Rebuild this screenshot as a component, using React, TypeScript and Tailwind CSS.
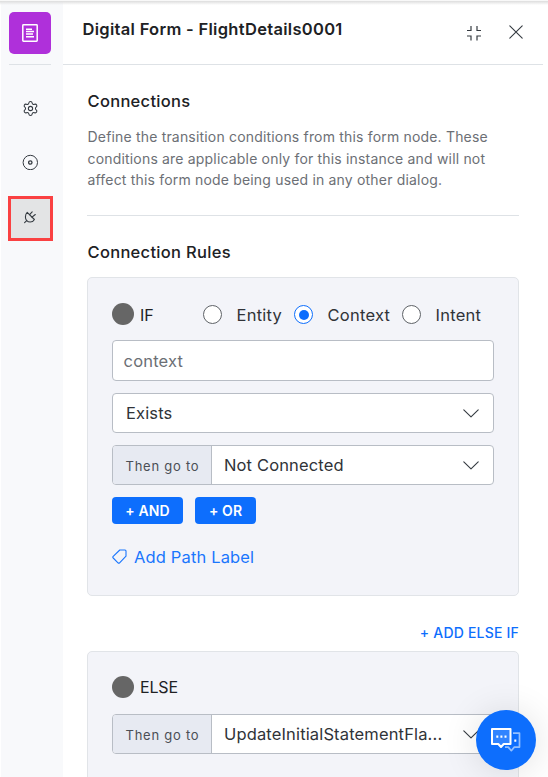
import React from "react";
import { Settings } from "lucide-react";

function Chevron() {
  return (
    <svg className="relative top-px" width="16" height="9" viewBox="0 0 16 9" fill="none" stroke="#343a40" strokeWidth="1.1" strokeLinecap="round" strokeLinejoin="round">
      <path d="M0.8 0.8 8 7.8 15.2 0.8" />
    </svg>
  );
}

function Radio({ checked = false }: { checked?: boolean }) {
  return (
    <span
      className={`mb-px flex h-[19px] w-[19px] shrink-0 items-center justify-center rounded-full border bg-white ${
        checked ? "border-[#0d6efd]" : "border-[#5f6368]"
      }`}
    >
      {checked && <span className="h-[10px] w-[10px] rounded-full bg-[#0d6efd]" />}
    </span>
  );
}

function GoTo({ value }: { value: string }) {
  return (
    <div className="flex h-10 overflow-hidden rounded-[4px] border border-[#b8bdc5] bg-white">
      <div className="flex w-[99px] shrink-0 items-center border-r border-[#b8bdc5] bg-[#e7eaf2] pt-1 pl-[12.5px] text-[13px] tracking-[0.75px] text-[#4b4f55]">
        Then go to
      </div>
      <div className="flex flex-1 items-center justify-between pr-[14px] pl-3">
        <span className="pt-px text-[16.5px] tracking-[0.15px] text-[#303338]">{value}</span>
        <Chevron />
      </div>
    </div>
  );
}

function Sidebar() {
  return (
    <aside className="ml-px flex w-[62px] shrink-0 flex-col items-center bg-[#f8f9fb] pr-1 pt-3">
      <div className="flex h-[42px] w-[42px] items-center justify-center rounded-[5px] bg-[#af30da]">
        <svg width="16" height="18" viewBox="0 0 16 18" fill="none" stroke="white" strokeWidth="1.5">
          <rect x="0.8" y="0.8" width="14.4" height="16.4" rx="0.7" />
          <path d="M4 5.2h6M4 7.5h8M4 10h7M4 12.8h8" strokeWidth="1.4" />
        </svg>
      </div>
      <div className="mt-[10px] h-px w-[42px] bg-[#dee2e6]" />
      <Settings className="mt-[35px] text-[#343a40]" size={17} strokeWidth={1.5} />
      <svg className="mt-[37px]" width="16" height="16" viewBox="0 0 16 16" fill="none" stroke="#343a40">
        <circle cx="8.3" cy="8.5" r="7.2" />
        <circle cx="8.3" cy="8.5" r="1.7" strokeWidth="1.3" />
      </svg>
      <div className="mt-[26px] flex h-[45px] w-[45px] items-center justify-center border-[3px] border-[#fa4142] bg-[#e3e4e5] pb-[4px]">
        <svg width="14" height="14" viewBox="0 0 14 14" fill="none" stroke="#343a40" strokeWidth="1.1" strokeLinecap="round" strokeLinejoin="round">
          <path d="m4.2 2.3 7.2 7.2c-.8 1.6-2.2 2.5-4.2 2.5-1.4 0-2.6-.5-3.5-1.4C2.8 9.700 2.400 8.500 2.400 7.100c0-2 .4-3.600 1.800-4.800Z" />
          <path d="M3.700 10.600 1.600 12.700M6.600 4.700l2.600-2.900M9 7.100l3.300-2.600" />
        </svg>
      </div>
    </aside>
  );
}

function ChatButton() {
  return (
    <button className="absolute top-[710px] left-[476px] flex h-[60px] w-[60px] items-center justify-center rounded-full bg-[#0d6efd] shadow-[0_2px_36px_rgba(0,0,0,0.12)]">
      <svg width="30" height="25" viewBox="0 0 30 25" fill="none" strokeLinejoin="round">
        <path d="M22 5.200h6.500v13.900h-5.200l-3 3.600-3-3.600H14" stroke="#92bfff" strokeWidth="1.7" />
        <path d="M1 1h18.500v15h-6.800L10 19l-2.700-3H1Z" fill="#3184ff" stroke="white" strokeWidth="2" />
        <path d="M5.300 7.600h2v2.200h-2ZM9.400 7.600h2v2.200h-2ZM13.500 7.600h2v2.200h-2ZM23.300 11.500h2v2.200h-2Z" fill="white" />
      </svg>
    </button>
  );
}

export default function App() {
  return (
    <div className="relative flex h-[777px] w-[548px] overflow-hidden bg-white font-['Inter','Liberation_Sans',sans-serif] text-[#202124]">
      <Sidebar />
      <div className="flex min-w-0 flex-1 flex-col">
        <header className="mr-[5px] flex h-[65px] shrink-0 items-center border-b border-[#dee2e6] pb-[6px] pl-[19.5px]">
          <h1 className="flex-1 text-[16.5px] font-semibold tracking-[0.3px] whitespace-nowrap">Digital Form - FlightDetails0001</h1>
          <svg className="mt-2 mr-[27px]" width="16" height="16" viewBox="0 0 16 16" fill="none" stroke="#343a40" strokeWidth="1.2">
            <path d="M1 5.500h4V1M11 1v4.500h4M1 11h4v4.500M11 15.500V11h4" />
          </svg>
          <svg className="mt-[5px] mr-5" width="14" height="14" viewBox="0 0 14 14" stroke="#343a40" strokeWidth="1.1" strokeLinecap="round">
            <path d="m0.800 0.800 12.400 12.400M13.200 0.800 0.800 13.200" />
          </svg>
        </header>
        <main className="pr-[29px] pl-6 pt-[24px]">
          <h2 className="pl-[0.5px] text-[16.5px] leading-6 font-medium tracking-[0.3px]">Connections</h2>
          <p className="mt-[13px] pl-[0.5px] text-[14px] leading-[21.5px] tracking-[0.18px] whitespace-nowrap text-[#6c6f75]">
            Define the transition conditions from this form node. These
            <br />
            conditions are applicable only for this instance and will not
            <br />
            affect this form node being used in any other dialog.
          </p>
          <div className="mt-6 h-px bg-[#dee2e6]" />
          <h2 className="mt-[24px] pl-[0.5px] text-[16.5px] leading-6 font-medium tracking-[0.3px]">Connection Rules</h2>
          <section className="mt-[13px] h-[319px] rounded-[5px] border border-[#e1e4e8] bg-[#f3f4f9] px-6 pt-[26px]">
            <div className="flex h-[23px] items-center text-[16.5px] whitespace-nowrap text-[#303338]">
              <span className="mb-[3px] h-[22px] w-[22px] rounded-full bg-[#666]" />
              <span className="ml-[6px] w-[63px] text-[16px] text-[#202124]">IF</span>
              <Radio />
              <span className="ml-[14.5px] w-[57.5px] tracking-[0.25px]">Entity</span>
              <Radio checked />
              <span className="ml-[14.5px] w-[74.5px] tracking-[0.25px]">Context</span>
              <Radio />
              <span className="ml-[14.5px] tracking-[0.25px]">Intent</span>
            </div>
            <div className="mt-[13px] flex h-[41px] items-center rounded-[4px] border border-[#b8bdc5] bg-white pt-[2px] pl-[10.5px] text-[16.5px] tracking-[0.2px] text-[#6c6f75]">
              context
            </div>
            <div className="mt-3 mb-3 flex h-10 items-center justify-between rounded-[4px] border border-[#b8bdc5] bg-white pr-[14px] pl-[13px] text-[16.5px] tracking-[0.15px] text-[#303338]">
              <span className="pt-px">Exists</span>
              <Chevron />
            </div>
            <GoTo value="Not Connected" />
            <div className="mt-3 flex gap-3 text-[14px] font-semibold text-white">
              <button className="h-[27px] w-[71px] rounded-[4px] bg-[#0d6efd] tracking-[0.1px]">+ AND</button>
              <button className="h-[27px] w-[61px] rounded-[4px] bg-[#0d6efd] tracking-[0.1px]">+ OR</button>
            </div>
            <div className="mt-[21px] flex items-center text-[16.5px] leading-6 tracking-[0.15px] text-[#1a76fd]">
              <svg className="mr-[7px]" width="15" height="15" viewBox="0 0 15 15" fill="none" stroke="currentColor" strokeWidth="1.1" strokeLinejoin="round">
                <path d="M7.800 1h5.200q1 0 1 1v5.200L7.600 13.800q-.8.8-1.600 0L1.200 9q-.8-.8 0-1.600Z" />
              </svg>
              Add Path Label
            </div>
          </section>
          <div className="mt-[26px] text-right text-[14px] leading-[22px] font-medium tracking-[0.2px] text-[#0d6efd]">+ ADD ELSE IF</div>
          <section className="mt-[7px] h-[140px] rounded-[5px] border border-[#e1e4e8] bg-[#f3f4f9] px-6 pt-6">
            <div className="mb-4 flex h-[22px] items-center text-[16px]">
              <span className="mr-[6px] h-[22px] w-[22px] rounded-full bg-[#666]" />
              <span className="tracking-[-0.15px]">ELSE</span>
            </div>
            <GoTo value="UpdateInitialStatementFla..." />
          </section>
        </main>
      </div>
      <div className="absolute inset-x-0 top-0 h-[5px] border-t border-[#f8f8f8] bg-linear-to-b from-[#dddddd] to-transparent" />
      <ChatButton />
    </div>
  );
}
